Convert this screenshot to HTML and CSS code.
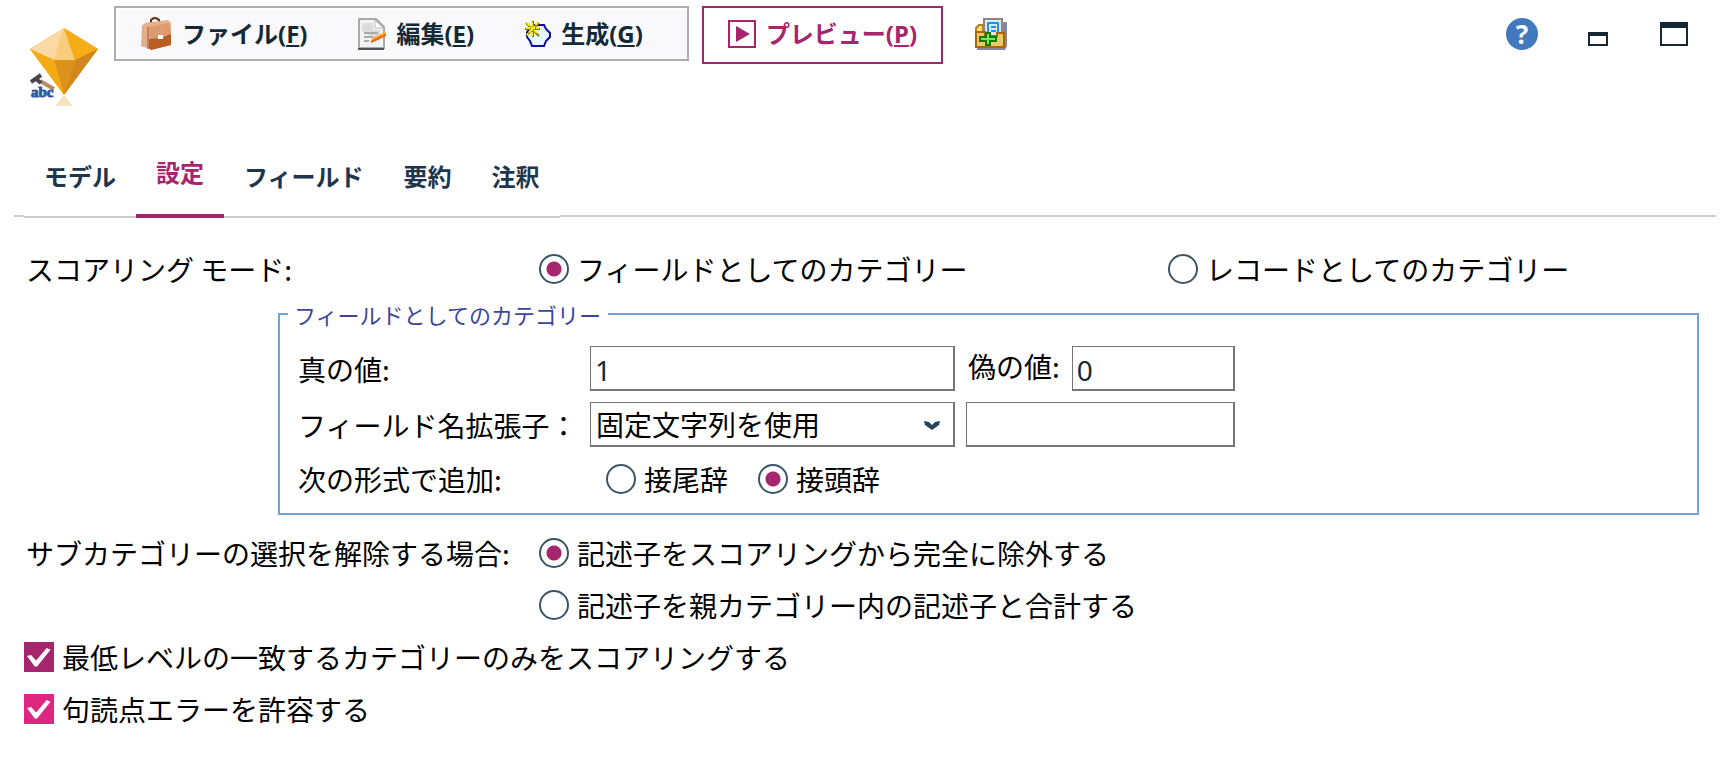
FILE: index.html
```html
<!DOCTYPE html>
<html lang="ja">
<head>
<meta charset="utf-8">
<title>設定</title>
<link rel="stylesheet" href="styles.css">
</head>
<body>
<header class="toolbar">
  <svg class="logo" viewBox="0 0 68 78" width="68" height="78" aria-hidden="true">
    <path d="M0 21 34 0 68 21 34 67Z" fill="#f5ae18"/>
    <path d="M34 0 0 21 24 32Z" fill="#fad9a4"/>
    <path d="M34 0 24 32H45Z" fill="#f9cd80"/>
    <path d="M34 0 45 32 68 21Z" fill="#f6ac16"/>
    <path d="M24 32H45L34 67Z" fill="#dd921c"/>
    <path d="M45 32 68 21 34 67Z" fill="#d0871d"/>
    <path d="M0 21 24 32 34 67Z" fill="#f4aa15"/>
    <path d="M34 67 25 78H43Z" fill="#f7e3bf"/>
    <path d="M10 53 24 61" stroke="#b98a68" stroke-width="4"/>
    <path d="M1 54 11 47M6 51 11 55" stroke="#484848" stroke-width="4"/>
    <text class="logo-text" x="1" y="69">abc</text>
  </svg>
  <nav class="menubar">
    <button class="menu menu-file" type="button">
      <svg width="32" height="34" viewBox="0 0 32 34" aria-hidden="true">
        <path d="M11 7V3Q15-1 19 3V7" fill="none" stroke="#5c2c18" stroke-width="2"/>
        <path d="M2 8 10 5V32L1 29Z" fill="#e3ae8c"/>
        <path d="M4 6 28 3 31 6V28L11 33 8 31V9Z" fill="#e9b08a"/>
        <path d="M9 20 31 16V28L11 33 9 31Z" fill="#b95e20"/>
        <path d="M9 10 29 6 31 17 21 21 9 22Z" fill="#dd9c70"/>
        <path d="M8 10V32" stroke="#9a5630" stroke-width="1"/>
        <path d="M18 18h5v4h-5z" fill="#fff"/>
      </svg>
      <span>ファイル(<u>F</u>)</span>
    </button>
    <button class="menu menu-edit" type="button">
      <svg width="28" height="32" viewBox="0 0 28 32" aria-hidden="true">
        <path d="M1 1H18L26 9V30H1Z" fill="#f3f3f3" stroke="#aaa" stroke-width="2"/>
        <path d="M4 5H15V12H22V24L4 13Z" fill="#dcdcdc"/>
        <path d="M17 2V10H25Z" fill="#fff" stroke="#bbb"/>
        <path d="M6 15H20M6 19H15M6 23H11" stroke="#aaa" stroke-width="2"/>
        <path d="M0 31H26" stroke="#555" stroke-width="2"/>
        <path d="M14 22 28 15" stroke="#ffa928" stroke-width="3"/>
        <path d="M13 24 28 17" stroke="#e76816" stroke-width="2"/>
      </svg>
      <span>編集(<u>E</u>)</span>
    </button>
    <button class="menu menu-make" type="button">
      <svg width="26" height="28" viewBox="0 0 26 28" aria-hidden="true">
        <path d="M8 5H19L21 9 25 13V17L21 21 19 26H7L5 21 2 17V12Z" fill="#e6f5ff" stroke="#0c0c9e" stroke-width="2"/>
        <path d="M8 1V17M0 9H15M1 3 14 16M14 3 1 16" stroke="#777300" stroke-width="2"/>
        <path d="M7 2V16M1 8H14M2 3 13 14M13 2 2 15" stroke="#fff000" stroke-width="2" stroke-dasharray="4 1"/>
      </svg>
      <span>生成(<u>G</u>)</span>
    </button>
  </nav>
  <button class="preview" type="button">
    <svg width="28" height="28" viewBox="0 0 28 28" aria-hidden="true">
      <path d="M1 1H27V27H1Z" fill="none" stroke="#a6266e" stroke-width="2"/>
      <path d="M8 6 22 14 8 22Z" fill="#a6266e"/>
    </svg>
    <span>プレビュー(<u>P</u>)</span>
  </button>
  <button class="tool" type="button" aria-label="パレットに追加">
    <svg width="32" height="32" viewBox="0 0 32 32" aria-hidden="true">
      <path d="M28 4H32V28L30 32H2V29H28Z" fill="#8587a0"/>
      <path d="M1 10 4 7H8V15H1Z" fill="#ffe177" stroke="#b87d16" stroke-width="2"/>
      <path d="M9 1H27V20H9Z" fill="#e4e6e8" stroke="#888" stroke-width="2"/>
      <path d="M13 18V5H23V18M16 9H21M16 13H21" fill="none" stroke="#1594f5" stroke-width="2"/>
      <path d="M1 14H10V18H22V15H29V29H1Z" fill="#f0c766" stroke="#a8690c" stroke-width="2"/>
      <path d="M11 15H15V19H21V23H15V27H11V23H5V19H11Z" fill="#83e553" stroke="#187811" stroke-width="2"/>
    </svg>
  </button>
  <div class="window-tools">
    <button class="tool help" type="button" aria-label="ヘルプ">?</button>
    <button class="tool minimize" type="button" aria-label="最小化"></button>
    <button class="tool maximize" type="button" aria-label="最大化"></button>
  </div>
</header>

<nav class="tabs">
  <button class="tab" type="button">モデル</button>
  <button class="tab active" type="button">設定</button>
  <button class="tab" type="button">フィールド</button>
  <button class="tab" type="button">要約</button>
  <button class="tab" type="button">注釈</button>
</nav>

<main class="settings">
  <div class="row">
    <span>スコアリング モード:</span>
    <div class="modes">
      <label class="choice"><input type="radio" name="mode" checked>フィールドとしてのカテゴリー</label>
      <label class="choice"><input type="radio" name="mode">レコードとしてのカテゴリー</label>
    </div>
  </div>

  <fieldset class="group">
    <legend>フィールドとしてのカテゴリー</legend>
    <div class="fields">
      <label for="true-value">真の値:</label>
      <input class="box" id="true-value" type="text" value="1">
      <div class="pair">
        <label class="pair-label" for="false-value">偽の値:</label>
        <input class="box" id="false-value" type="text" value="0">
      </div>
      <label for="extension">フィールド名拡張子：</label>
      <div class="select">
        <select class="box" id="extension"><option>固定文字列を使用</option></select>
        <svg class="arrow" width="16" height="10" viewBox="0 0 16 10" aria-hidden="true"><path d="M0 1 5 2 8 5 11 2 16 1 15 5 8 10 1 5Z" fill="#264358"/></svg>
      </div>
      <input class="box" type="text" aria-label="拡張子の文字列">
      <span>次の形式で追加:</span>
      <div class="affix">
        <label class="choice"><input type="radio" name="affix">接尾辞</label>
        <label class="choice"><input type="radio" name="affix" checked>接頭辞</label>
      </div>
    </div>
  </fieldset>

  <div class="row">
    <span>サブカテゴリーの選択を解除する場合:</span>
    <label class="choice"><input type="radio" name="sub" checked>記述子をスコアリングから完全に除外する</label>
    <label class="choice second"><input type="radio" name="sub">記述子を親カテゴリー内の記述子と合計する</label>
  </div>
  <label class="check"><input type="checkbox" checked>最低レベルの一致するカテゴリーのみをスコアリングする</label>
  <label class="check bright"><input type="checkbox" checked>句読点エラーを許容する</label>
</main>
</body>
</html>
```

FILE: styles.css
```css
* { box-sizing: border-box; }
body {
  margin: 0;
  background: #fff;
  color: #000;
  font: 28px/42px "Noto Sans CJK JP", "Noto Sans", sans-serif;
}
button, input, select { font: inherit; color: inherit; margin: 0; }
button { padding: 0; border: 0; background: none; }
svg { display: block; flex: none; }
u { text-underline-offset: 2px; text-decoration-thickness: 2px; text-decoration-skip-ink: none; }

.toolbar { display: flex; align-items: flex-start; padding: 6px 46px 0 30px; }
.logo { margin: 22px 16px 0 0; }
.logo-text {
  font: bold 15px "Liberation Serif", serif;
  fill: #31589c;
  stroke: #31589c;
  stroke-width: 1px;
}
.menubar {
  display: flex;
  align-items: center;
  gap: 51px;
  height: 55px;
  padding: 0 44px 0 24px;
  border: 2px solid #adadad;
  background: #f9f9fb;
  box-shadow: inset 2px 2px #fff;
}
.menu, .preview {
  display: flex;
  align-items: center;
  gap: 10px;
  font: bold 24px/32px "Noto Sans", "Noto Sans CJK JP", sans-serif;
  color: #152935;
  white-space: nowrap;
}
.preview {
  height: 58px;
  margin: 0 32px 0 13px;
  padding: 0 24px 2px;
  border: 2px solid #a6266e;
  color: #a6266e;
}
.tool { flex: none; margin-top: 12px; }
.window-tools { display: flex; margin-left: auto; }
.help {
  width: 32px;
  height: 32px;
  border-radius: 50%;
  background: #4178be;
  color: #fff;
  font: bold 26px/32px "Noto Sans", sans-serif;
}
.minimize {
  width: 20px;
  height: 14px;
  margin: 26px 52px 0 50px;
  border: 2px solid #152935;
  border-top-width: 4px;
}
.maximize {
  width: 28px;
  height: 24px;
  margin-top: 16px;
  border: 2px solid #152935;
  border-top-width: 6px;
}

.tabs { display: flex; margin: 42px 18px 0 14px; }
.tabs::before, .tabs::after {
  content: "";
  width: 10px;
  margin-bottom: 1px;
  border-bottom: 2px solid #ccc;
}
.tabs::after { flex: 1; }
.tab {
  height: 70px;
  padding: 0 20px 12px;
  border-bottom: 2px solid #ccc;
  color: #1d364d;
  font-size: 24px;
  font-weight: bold;
  line-height: 32px;
}
.tab.active { padding-bottom: 18px; border-bottom: 4px solid #a6266e; color: #a6266e; }

.settings { padding: 30px 35px 0 24px; }
.row { display: grid; grid-template-columns: 513px 1fr; row-gap: 10px; padding-left: 2px; }
.modes { display: grid; grid-template-columns: 629fr 531fr; }
.second { grid-column: 2; }
.choice, .check { display: flex; align-items: center; gap: 8px; white-space: nowrap; }
input[type="radio"] {
  appearance: none;
  flex: none;
  width: 30px;
  height: 30px;
  border: 2px solid #3b5468;
  border-radius: 50%;
}
input[type="radio"]:checked { background: radial-gradient(circle, #a6266e 7px, transparent 8px); }

.group {
  margin: 8px 0 17px 254px;
  padding: 16px 18px 13px;
  border: 2px solid #72a3d4;
}
.group legend {
  margin-left: -10px;
  padding: 0 7px 0 6px;
  color: #3c4699;
  font-size: 22px;
  line-height: 32px;
}
.fields {
  display: grid;
  grid-template-columns: 281px 365px 269px;
  column-gap: 11px;
  row-gap: 11px;
  align-items: center;
}
.box {
  width: 100%;
  min-width: 0;
  height: 45px;
  padding: 0 5px;
  border: 1px solid #767676;
  border-right-width: 2px;
  border-bottom-width: 2px;
  border-radius: 0;
  background: #fff;
}
input.box { padding: 3px 4px 0; color: #152935; font-family: "Noto Sans", sans-serif; }
.pair { display: flex; gap: 12px; }
.pair-label { flex: none; padding-left: 2px; line-height: 40px; }
.select { display: grid; align-items: center; }
.select > * { grid-area: 1 / 1; }
.select select { appearance: none; }
.arrow { justify-self: end; margin-right: 15px; pointer-events: none; }
.affix { display: flex; gap: 30px; grid-column: 2 / 4; padding-left: 16px; }

.check { margin-top: 10px; }
.check input {
  appearance: none;
  flex: none;
  display: grid;
  place-items: center;
  width: 30px;
  height: 30px;
  background: #a6266e;
}
.check input::before {
  content: "";
  width: 24px;
  height: 20px;
  background: #fff;
  clip-path: polygon(0 45%, 17% 40%, 38% 68%, 82% 5%, 98% 14%, 42% 98%, 32% 98%);
}
.check.bright input { background: #dc267f; }
```
